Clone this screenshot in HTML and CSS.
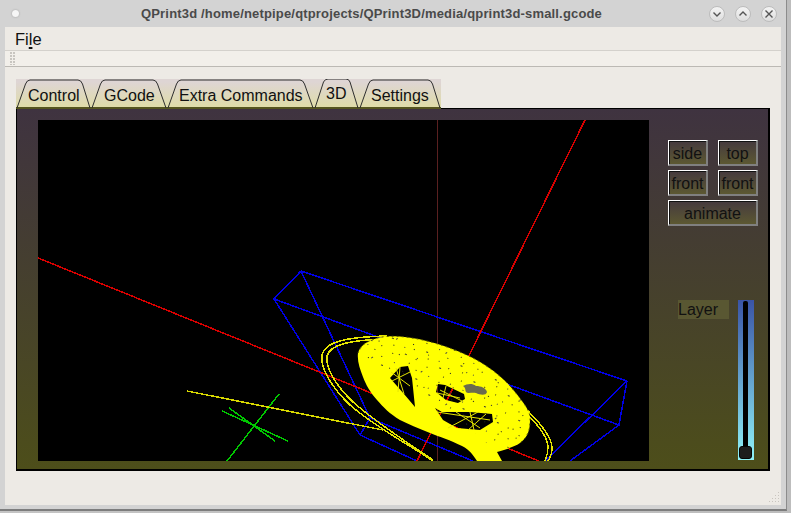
FILE: index.html
```html
<!DOCTYPE html>
<html lang="en">
<head>
    <meta charset="UTF-8">
    <title>QPrint3d</title>
    <link rel="stylesheet" href="styles.css">
</head>
<body>
<div class="window">
    <div class="titlebar">
        <span class="menu-dot"></span>
        <span class="title">QPrint3d /home/netpipe/qtprojects/QPrint3D/media/qprint3d-small.gcode</span>
        <div class="controls">
            <span class="wbtn"><svg width="10" height="10" viewBox="0 0 10 10"><path d="M1.5 3.5 5 7 8.5 3.5"/></svg></span>
            <span class="wbtn"><svg width="10" height="10" viewBox="0 0 10 10"><path d="M1.5 6.5 5 3 8.5 6.5"/></svg></span>
            <span class="wbtn"><svg width="10" height="10" viewBox="0 0 10 10"><path d="M1.5 1.5 8.5 8.5M8.5 1.5 1.5 8.5"/></svg></span>
        </div>
    </div>
    <div class="main">
        <div class="menubar"><span class="menu-item">Fi<u>l</u>e</span></div>
        <div class="toolbar"><span class="handle"></span></div>
        <div class="central">
            <div class="tabs">
                <svg class="tab-lines" width="425" height="30" viewBox="16 79 425 30">
                    <path d="M17 108 25.500 84Q27 80 30 80H78Q81 80 82.500 84L90 108"/>
                    <path d="M92 108 100.500 84Q102 80 105 80H153Q156 80 157.500 84L166 108"/>
                    <path d="M168 108 176.500 84Q178 80 181 80H300Q303 80 304.500 84L313 108"/>
                    <path d="M315 108 323.500 82Q325 79 328 79H346Q349 79 350 82L358 108"/>
                    <path d="M360 108 368.500 84Q370 80 373 80H428Q431 80 432.500 84L440 108"/>
                </svg>
                <span class="tab tab-control">Control</span>
                <span class="tab tab-gcode">GCode</span>
                <span class="tab tab-extra">Extra Commands</span>
                <span class="tab tab-3d">3D</span>
                <span class="tab tab-settings">Settings</span>
            </div>
            <div class="pane">
                <svg class="view" width="611" height="341" viewBox="38 120 611 341">
                    <defs>
                        <pattern id="specks" width="37" height="29" patternUnits="userSpaceOnUse" patternTransform="rotate(22)">
                            <rect x="2" y="3" width="1" height="1" fill="#222"/>
                            <rect x="9" y="21" width="2" height="1" fill="#333"/>
                            <rect x="15" y="6" width="1" height="1" fill="#222"/>
                            <rect x="20" y="14" width="1" height="1" fill="#444"/>
                            <rect x="6" y="13" width="1" height="1" fill="#222"/>
                            <rect x="27" y="2" width="2" height="1" fill="#333"/>
                            <rect x="31" y="19" width="1" height="1" fill="#222"/>
                            <rect x="24" y="25" width="1" height="1" fill="#444"/>
                            <rect x="34" y="9" width="1" height="1" fill="#222"/>
                            <rect x="13" y="27" width="1" height="1" fill="#222"/>
                        </pattern>
                        <pattern id="specks2" width="31" height="41" patternUnits="userSpaceOnUse" patternTransform="rotate(-37)">
                            <rect x="4" y="8" width="1" height="1" fill="#333"/>
                            <rect x="12" y="31" width="1" height="1" fill="#222"/>
                            <rect x="19" y="17" width="2" height="1" fill="#444"/>
                            <rect x="27" y="36" width="1" height="1" fill="#222"/>
                            <rect x="24" y="4" width="1" height="1" fill="#333"/>
                        </pattern>
                    </defs>
                    <path class="dim" d="M437.500 120V461"/>
                    <path class="blue" d="M301 271 274 299M301 271 627 381M274 299 619 425M301 271 370 418M274 299 360 435M360 435 370 418M370 418 473 461M360 435 417 461M627 381 619 425 570 461M627 381 545 461"/>
                    <path class="red" d="M38 258 539 461M585 120 417 461"/>
                    <path class="green" d="M279 394 227 461M229 408 275 441M222 411 288 441"/>
                    <path class="yellow-thin" d="M187 391 383 430"/>
                    <path class="ring" d="M433 461C405 442 375 427 350 405C332 388 320 368 322 355C325 342 345 337 387 336"/>
                    <path class="ring" d="M433 460C405 441 378 424 353 402C336 386 325 367 327 356C330 345 348 340 387 339"/>
                    <path class="ring" d="M527 410C540 422 552 438 552 448C552 453 550 458 548 461"/>
                    <path class="ring" d="M527 414C537 424 548 438 548 447C548 452 547 456 545 461"/>
                    <path class="blob" fill-rule="evenodd" d="M358 353C360 347 364 343 372 340C380 336 395 335 412 338C432 341 455 349 473 358C490 367 505 379 515 392C524 403 531 412 530 420C530 430 528 437 520 443C514 447 507 449 497 452L502 461H477C473 455 470 450 462 446C450 440 440 437 430 433C418 428 408 424 400 420C390 414 383 407 377 400C370 392 366 385 363 377C360 369 357 361 358 353ZM390 378 400 367 408 366 412 378 415 407 404 394ZM438 384 445 385 464 394 465 399 458 403 446 400 436 392ZM435 408 442 412 470 412 492 414 493 422 480 430 457 428 443 420Z"/>
                    <path class="blob-specks" fill-rule="evenodd" d="M358 353C360 347 364 343 372 340C380 336 395 335 412 338C432 341 455 349 473 358C490 367 505 379 515 392C524 403 531 412 530 420C530 430 528 437 520 443L497 452 460 420 400 380Z"/>
                    <path class="blob-specks2" fill-rule="evenodd" d="M358 353C360 347 364 343 372 340C380 336 395 335 412 338C432 341 455 349 473 358C490 367 505 379 515 392C524 403 531 412 530 420C530 430 528 437 520 443L497 452 460 420 400 380Z"/>
                    <path class="blob-edge" d="M358 353C360 347 364 343 372 340C380 336 395 335 412 338C432 341 455 349 473 358C490 367 505 379 515 392C524 403 531 412 530 420C530 430 528 437 520 443"/>
                    <path class="strand" d="M392 381 410 372M396 368 404 394M391 372 410 386M400 367 398 392M440 390 462 401M446 386 443 398M437 393 460 398M437 412 490 420M448 428 478 412M470 412 474 430M456 412 480 428M486 414 468 430"/>
                    <path class="speck" d="M463 386C467 384 472 383 476 386C481 386 486 388 487 392C486 396 480 395 476 393C472 392 468 394 466 392C465 390 466 388 463 386Z"/>
                </svg>
                <div class="side">
                    <div class="btn-grid">
                        <span class="btn">side</span>
                        <span class="btn">top</span>
                        <span class="btn">front</span>
                        <span class="btn">front</span>
                        <span class="btn btn-wide">animate</span>
                    </div>
                    <div class="layer-row">
                        <span class="layer-label">Layer</span>
                        <div class="slider"><span class="groove"></span><span class="knob"></span></div>
                    </div>
                </div>
            </div>
        </div>
        <svg class="grip" width="12" height="12" viewBox="0 0 12 12">
            <path d="M10 1h1v1h-1zM7 4h1v1H7zM10 4h1v1h-1zM4 7h1v1H4zM7 7h1v1H7zM10 7h1v1h-1zM1 10h1v1H1zM4 10h1v1H4zM7 10h1v1H7zM10 10h1v1h-1z"/>
        </svg>
    </div>
</div>
</body>
</html>
```

FILE: styles.css
```css
*{
    margin: 0;
    padding: 0;
    box-sizing: border-box;
}

body{
    width: 791px;
    height: 513px;
    overflow: hidden;
    background: linear-gradient(to right, #c4c4c4, #bdbdbd);
    font-family: "Liberation Sans", Arial, sans-serif;
    color: #111;
}

.window{
    width: 787px;
    height: 511px;
    padding: 0 5px 4px 5px;
    background: #d3d3d3;
    border-right: 1px solid #8c8c8c;
    border-bottom: 2px solid #7d7d7d;
    display: flex;
    flex-direction: column;
}

/* title bar */
.titlebar{
    height: 27px;
    display: flex;
    align-items: center;
    flex-shrink: 0;
}
.menu-dot{
    width: 7px;
    height: 7px;
    margin-left: 7px;
    border-radius: 50%;
    background: #f6f6f6;
    box-shadow: 0 0 2px #999;
}
.title{
    margin-left: 122px;
    font-size: 13px;
    font-weight: bold;
    letter-spacing: 0.17px;
    color: #4a4a4a;
    white-space: nowrap;
}
.controls{
    margin-left: auto;
    margin-right: 4px;
    display: flex;
    gap: 10px;
}
.wbtn{
    width: 16px;
    height: 16px;
    border-radius: 50%;
    background: linear-gradient(#f4f4f4, #dedede);
    border: 1px solid #bcbcbc;
    display: flex;
    align-items: center;
    justify-content: center;
}
.wbtn svg path{
    fill: none;
    stroke: #555;
    stroke-width: 1.4;
}

/* main area */
.main{
    flex: 1;
    position: relative;
    background: #edeae5;
}
.menubar{
    height: 24px;
    padding: 3px 0 0 10px;
    font-size: 16.5px;
    border-bottom: 1px solid #d4d1cc;
}
.menu-item u{
    text-decoration-thickness: 2px;
    text-underline-offset: 2px;
}
.toolbar{
    height: 16px;
    padding: 1px 0 0 5px;
    background: #f2efea;
    border-bottom: 1px solid #bcb9b4;
}
.handle{
    display: block;
    width: 5px;
    height: 13px;
    background-image: radial-gradient(circle at 1px 1px, #c8c5c0 1px, transparent 1px);
    background-size: 3px 3px;
}
.central{
    padding: 12px 11px 0 11px;
}

/* tabs */
.tabs{
    position: relative;
    width: 425px;
    height: 30px;
    display: flex;
    background: linear-gradient(#ded5d4 10%, #dfdca8 calc(100% - 2px), #55551f calc(100% - 2px));
    font-size: 16px;
    margin-bottom: -1px;
}
.tab-lines{
    position: absolute;
    left: 0;
    top: 0;
}
.tab-lines path{
    fill: none;
    stroke: #2e2e2e;
    stroke-width: 1;
}
.tab{
    position: relative;
    padding: 8px 0 0 12px;
    white-space: nowrap;
}
.tab-control{
    width: 76px;
}
.tab-gcode{
    width: 75px;
}
.tab-extra{
    width: 147px;
}
.tab-3d{
    width: 45px;
    padding-top: 6px;
}
.tab-settings{
    width: 82px;
}

/* pane */
.pane{
    width: 754px;
    height: 363px;
    display: flex;
    padding: 11px 0 0 21px;
    background: linear-gradient(#3f3340, #4d4e1a);
    border: 1px solid #000;
    border-width: 1px 2px 2px 1px;
}
.view{
    display: block;
    flex-shrink: 0;
    background: #000;
}
.view path{
    fill: none;
}
.view .dim{
    stroke: #5a2020;
    stroke-width: 1;
}
.view .blue{
    stroke: #0000e6;
    stroke-width: 1.5;
    shape-rendering: crispEdges;
}
.view .red{
    stroke: #d80000;
    stroke-width: 1.5;
    shape-rendering: crispEdges;
}
.view .green{
    stroke: #00c800;
    stroke-width: 1.5;
    shape-rendering: crispEdges;
}
.view .yellow-thin{
    stroke: #d8d800;
    stroke-width: 1.5;
    shape-rendering: crispEdges;
}
.view .ring{
    stroke: #e6e600;
    stroke-width: 1.5;
    shape-rendering: crispEdges;
}
.view .blob{
    fill: #ffff00;
}
.view .blob-specks{
    fill: url(#specks);
}
.view .blob-specks2{
    fill: url(#specks2);
}
.view .blob-edge{
    stroke: #5c5c00;
    stroke-width: 1;
    stroke-dasharray: 2 3;
}
.view .strand{
    stroke: #e6e600;
    stroke-width: 1;
}
.view .speck{
    fill: #6b6b4e;
}

/* side panel */
.side{
    flex: 1;
    padding: 20px 0 0 19px;
    display: flex;
    flex-direction: column;
}
.btn-grid{
    display: grid;
    grid-template-columns: 40px 40px;
    grid-auto-rows: 26px;
    column-gap: 10px;
    row-gap: 4px;
}
.btn{
    display: flex;
    align-items: center;
    justify-content: center;
    padding-top: 2px;
    font-size: 16px;
    background: linear-gradient(#453a3e, #5c5832);
    border-style: solid;
    border-width: 1px 2px 2px 1px;
    border-color: #fff #808080 #808080 #fff;
    box-shadow: inset 1px 1px 0 #111;
}
.btn-wide{
    grid-column: 1 / 3;
}
.layer-row{
    display: flex;
    margin-top: 74px;
    margin-left: 10px;
    align-items: flex-start;
}
.layer-label{
    width: 51px;
    height: 19px;
    font-size: 16px;
    line-height: 19px;
    background: #595732;
}
.slider{
    position: relative;
    width: 16px;
    height: 160px;
    margin-left: 9px;
    background: linear-gradient(#3a54a6, #8ff2f7);
}
.groove{
    position: absolute;
    left: 5px;
    top: 1px;
    width: 5px;
    height: 154px;
    background: #000;
    border-radius: 2px;
}
.knob{
    position: absolute;
    left: 1px;
    top: 146px;
    width: 13px;
    height: 13px;
    background: #1d1d1d;
    border: 1px solid #050505;
    border-radius: 3px;
}

.grip{
    position: absolute;
    right: 1px;
    bottom: 2px;
}
.grip path{
    fill: #c9c5bf;
}
```
